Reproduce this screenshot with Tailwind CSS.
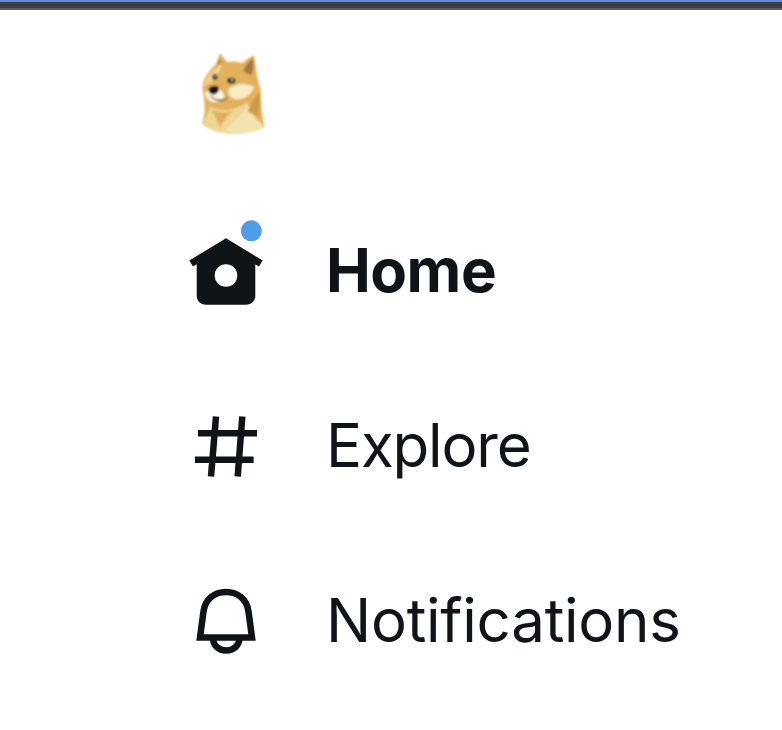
<!DOCTYPE html>
<html lang="en">
<head>
  <meta charset="UTF-8" />
  <meta name="viewport" content="width=device-width, initial-scale=1.0" />
  <title>Home</title>
  <script src="https://cdn.jsdelivr.net/npm/@tailwindcss/browser@4"></script>
</head>
<body class="bg-white font-['Inter',sans-serif] text-[#0f1419] overflow-hidden">
  <!-- Window edge -->
  <div class="h-[10px] border-t-2 border-b-2 border-t-[#5f86d8] border-b-[#5c5f63] bg-[#3a3d42]"></div>

  <!-- Sidebar -->
  <div class="pl-[170px]">
    <!-- Logo -->
    <div class="h-[174px] pt-[20px]">
      <svg class="w-[120px] h-[120px]" viewBox="0 0 360 360">
        <defs>
          <filter id="soft" x="-10%" y="-10%" width="120%" height="120%"><feGaussianBlur stdDeviation="2.500" /></filter>
        </defs>
        <g filter="url(#soft)">
          <path d="M95 282C108 252 106 225 97 172C100 140 122 118 138 102L150 70C158 78 165 90 172 97C190 92 205 94 216 100C225 92 240 82 252 76C258 105 258 135 272 180C272 225 276 260 284 290C240 318 150 322 95 282Z" fill="#e3b05c" />
          <path d="M95 282C110 262 116 245 120 228C150 252 200 240 232 216C232 250 260 270 284 290C240 318 150 322 95 282Z" fill="#eed694" />
          <path d="M122 238C145 250 165 250 188 242C172 258 158 272 150 294C144 272 135 255 122 238Z" fill="#e0ae55" />
          <path d="M165 302C190 272 218 255 234 222C240 250 262 270 284 290C250 310 205 318 165 302Z" fill="#f3e3b0" />
          <path d="M234 245C240 222 256 200 270 184C272 215 270 235 264 258C254 254 244 250 234 245Z" fill="#cd9a4a" />
          <path d="M100 172C106 140 128 120 152 104C160 116 142 130 134 150C120 158 108 165 100 172Z" fill="#f0d391" />
          <path d="M174 180C195 158 228 158 252 170C246 196 215 212 190 207C178 200 174 190 174 180Z" fill="#fbecc4" />
          <path d="M106 190C120 166 148 166 162 195C164 210 150 220 126 215C112 210 106 200 106 190Z" fill="#fdf6e4" />
          <path d="M220 122C226 104 240 92 248 84C253 105 249 122 245 134C236 134 227 130 220 122Z" fill="#a47a40" />
          <path d="M146 84L160 100L142 103Z" fill="#bd8a40" />
          <path d="M127 141a8 9 0 1 0 16 0a8 9 0 1 0 -16 0Z" fill="#35332b" />
          <path d="M171 152a13 9 0 1 0 26 0a13 9 0 1 0 -26 0Z" fill="#35332b" />
          <circle cx="137" cy="139" r="2.500" fill="#e8e4d8" />
          <circle cx="186" cy="150" r="3" fill="#e8e4d8" />
          <path d="M115 177C122 165 140 165 147 173C148 187 136 195 126 193C119 191 115 185 115 177Z" fill="#15130f" />
          <path d="M120 197C135 211 155 213 172 204C160 216 135 216 120 197Z" fill="#5a5244" stroke="#5a5244" stroke-width="2" />
        </g>
      </svg>
    </div>

    <nav>
      <!-- Home -->
      <div class="flex items-center h-[175px]">
        <svg class="w-[110px] h-[110px] shrink-0" viewBox="0 11.500 110 110">
          <path fill="#0f1419" d="M56 32.700L19.300 55L23 61L26.700 58.800V90C26.700 95.500 30.500 99.300 36 99.300H76C81.500 99.300 85.300 95.500 85.300 90V58.800L89 61L92.700 55Z" />
          <circle cx="56" cy="70" r="11.300" fill="#fff" />
          <circle cx="81.300" cy="25.300" r="10.500" fill="#4f9cea" />
        </svg>
        <span class="ml-[46px] mb-[4px] text-[60px] leading-none font-bold tracking-[-0.5px]">Home</span>
      </div>

      <!-- Explore -->
      <div class="flex items-center h-[175px]">
        <svg class="w-[110px] h-[110px] shrink-0" viewBox="0 -7 110 110" fill="none" stroke="#0f1419" stroke-width="6.500">
          <path d="M28 34.200H87M25 60.800H83.600M46 17.500L41 77.500M72.300 17.500L67.700 77.500" />
        </svg>
        <span class="ml-[46px] mb-[4px] text-[60px] leading-none tracking-[-1.15px]">Explore</span>
      </div>

      <!-- Notifications -->
      <div class="flex items-center h-[175px]">
        <svg class="w-[110px] h-[110px] shrink-0" viewBox="0 -8.500 110 110" fill="none" stroke="#0f1419" stroke-width="6.500">
          <path d="M30 62L33.500 36C35 24 44 16.500 56 16.500C68 16.500 77 24 78.500 36L82 62Z" />
          <path d="M43 62C43 70.500 49 75 56 75C63 75 69.500 70.500 69.500 62" />
        </svg>
        <span class="ml-[46px] mb-[4px] text-[60px] leading-none tracking-[-0.25px]">Notifications</span>
      </div>
    </nav>
  </div>
</body>
</html>
